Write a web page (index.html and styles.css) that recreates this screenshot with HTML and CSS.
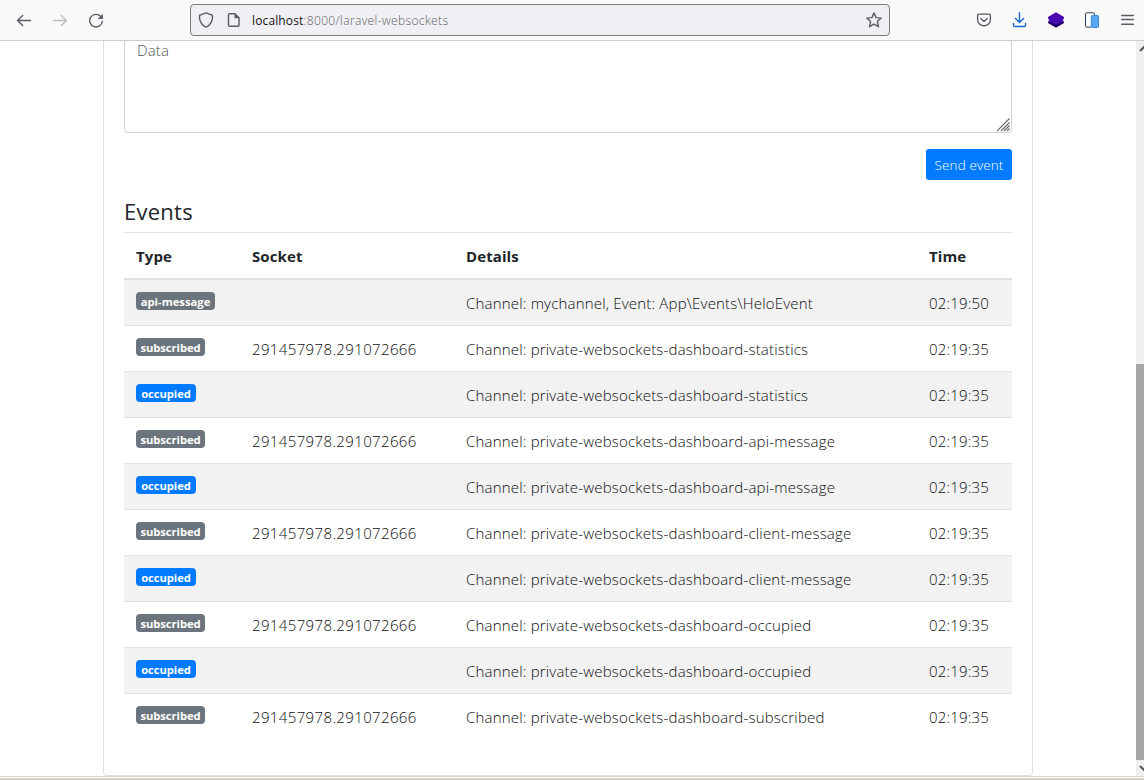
FILE: index.html
```html
<!DOCTYPE html>
<html lang="en">
<head>
<meta charset="utf-8">
<title>Laravel WebSockets</title>
<link rel="stylesheet" href="styles.css">
</head>
<body>
<header class="toolbar">
  <nav class="nav-buttons">
    <svg class="icon" width="16" height="16" viewBox="0 0 16 16"><path d="M14.5 8.5H1.5M6.7 3.5L1.5 8.5L6.7 13.5"/></svg>
    <svg class="icon faded" width="16" height="16" viewBox="0 0 16 16"><path d="M1.5 8.5H14.5M9.3 3.5L14.5 8.5L9.3 13.5"/></svg>
    <svg class="icon" width="16" height="16" viewBox="0 0 16 16"><path d="M12.6 4.3A6.3 6.3 0 1 0 14.3 9.2"/><path class="solid" d="M14.9 1.7V6.9H9.7Z"/></svg>
  </nav>
  <div class="urlbar">
    <svg class="icon" width="16" height="16" viewBox="0 0 16 16"><path d="M8 .9L14.5 3.4C15 8.3 12.7 13.3 8 15.2C3.3 13.3 1 8.3 1.5 3.4Z"/></svg>
    <svg class="icon page" width="16" height="16" viewBox="0 0 16 16"><path d="M3.5 1.7H9L13 5.7V13.3Q13 14.3 12 14.3H3.5Q2.5 14.3 2.5 13.3V2.7Q2.5 1.7 3.5 1.7Z"/><path class="solid" d="M8.5 1.3V6.3H13.4Z"/></svg>
    <span class="url"><b>localhost</b>:8000/laravel-websockets</span>
    <svg class="icon star" width="16" height="16" viewBox="0 0 16 16"><path d="M8 .9L10.1 5.6L15.2 6.1L11.4 9.6L12.5 14.7L8 12.1L3.5 14.7L4.6 9.6L.8 6.1L5.9 5.6Z"/></svg>
  </div>
  <div class="tools">
    <svg class="icon" width="16" height="16" viewBox="0 0 16 16"><path d="M2.8 2.1H13.2Q14.4 2.1 14.4 3.3V7.6A6.4 6.2 0 0 1 1.6 7.6V3.3Q1.6 2.1 2.8 2.1Z"/><path d="M4.8 6.4L8 9.4L11.2 6.4"/></svg>
    <svg class="icon download" width="16" height="16" viewBox="0 0 16 16"><path d="M7.5 .7V10.2M3.5 6.4L7.5 10.4L11.5 6.4M1.5 11.5V13.2Q1.5 14.5 2.8 14.5H12.2Q13.5 14.5 13.5 13.2V11.5"/></svg>
    <svg width="16" height="16" viewBox="0 0 16 16"><path fill="#21006b" d="M0 10L2 8.5H14L16 10V11L8 15.7L0 11Z"/><path fill="#4a08b0" d="M8 .3L16 5V6.5L14.5 8L16 9L8 12.5L0 9L1.5 8L0 6.5V5Z"/></svg>
    <svg width="16" height="16" viewBox="0 0 16 16"><path d="M10.5 3V2.2Q10.5 .8 9.2 .8H2.8Q1.5 .8 1.5 2.2V13.8Q1.5 15.1 2.8 15.1H7" fill="#fff" stroke="#26385d"/><rect x="7.3" y="3.4" width="7.2" height="12" rx="1.2" fill="#53a7f5" stroke="#3d82c9"/></svg>
    <svg class="icon" width="14" height="16" viewBox="0 0 14 16"><path d="M1.7 3.5H13.3M1.7 7.5H13.3M1.7 12.2H13.3"/></svg>
  </div>
</header>
<div class="viewport">
  <main class="page-body">
    <section class="card">
      <div class="data-field">Data
        <svg class="grip" width="14" height="14" viewBox="0 0 14 14"><path d="M0 13L12.5 .5M4 13L12.5 4.5M7 13L12.5 7.5M10 13L12.5 10.5"/></svg>
      </div>
      <div class="actions"><button class="send">Send event</button></div>
      <h4 class="title">Events</h4>
      <table class="events">
        <colgroup><col class="c-type"><col class="c-socket"><col class="c-details"><col class="c-time"></colgroup>
        <thead><tr><th>Type</th><th>Socket</th><th>Details</th><th>Time</th></tr></thead>
        <tbody>
          <tr><td><span class="badge api">api-message</span></td><td></td><td>Channel: mychannel, Event: App\Events\HeloEvent</td><td>02:19:50</td></tr>
          <tr><td><span class="badge">subscribed</span></td><td class="num">291457978.291072666</td><td>Channel: private-websockets-dashboard-statistics</td><td>02:19:35</td></tr>
          <tr><td><span class="badge primary">occupied</span></td><td></td><td>Channel: private-websockets-dashboard-statistics</td><td>02:19:35</td></tr>
          <tr><td><span class="badge">subscribed</span></td><td class="num">291457978.291072666</td><td>Channel: private-websockets-dashboard-api-message</td><td>02:19:35</td></tr>
          <tr><td><span class="badge primary">occupied</span></td><td></td><td>Channel: private-websockets-dashboard-api-message</td><td>02:19:35</td></tr>
          <tr><td><span class="badge">subscribed</span></td><td class="num">291457978.291072666</td><td>Channel: private-websockets-dashboard-client-message</td><td>02:19:35</td></tr>
          <tr><td><span class="badge primary">occupied</span></td><td></td><td>Channel: private-websockets-dashboard-client-message</td><td>02:19:35</td></tr>
          <tr><td><span class="badge">subscribed</span></td><td class="num">291457978.291072666</td><td>Channel: private-websockets-dashboard-occupied</td><td>02:19:35</td></tr>
          <tr><td><span class="badge primary">occupied</span></td><td></td><td>Channel: private-websockets-dashboard-occupied</td><td>02:19:35</td></tr>
          <tr><td><span class="badge">subscribed</span></td><td class="num">291457978.291072666</td><td>Channel: private-websockets-dashboard-subscribed</td><td>02:19:35</td></tr>
        </tbody>
      </table>
    </section>
  </main>
  <aside class="scrollbar">
    <svg class="arrow" width="8" height="15" viewBox="0 0 8 15"><path d="M4 10L8.5 5.5"/></svg>
    <div class="thumb"></div>
    <svg class="arrow" width="8" height="16" viewBox="0 0 8 16"><path d="M4 6L8.5 10.5"/></svg>
  </aside>
</div>
<footer class="window-edge"></footer>
</body>
</html>
```
FILE: styles.css
```css
* { box-sizing: border-box; }
body {
  margin: 0;
  width: 1144px;
  height: 780px;
  display: flex;
  flex-direction: column;
  overflow: hidden;
  background: #fff;
  color: #0c0e10;
  font: 300 15px/24px "Open Sans", "Noto Sans", sans-serif;
}
svg { display: block; flex: none; }
.toolbar {
  flex: none;
  height: 41px;
  display: flex;
  align-items: center;
  background: #f9f9fa;
  border-bottom: 1px solid #ccc;
}
.icon { fill: none; stroke: #5b5b66; stroke-width: 1.4; stroke-linecap: round; stroke-linejoin: round; }
.icon .solid { fill: #5b5b66; stroke: none; }
.faded { stroke: #bdbdc1; }
.download { stroke: #1a66d2; }
.nav-buttons { display: flex; gap: 20px; width: 190px; padding-left: 16px; }
.urlbar {
  display: flex;
  align-items: center;
  width: 700px;
  height: 32px;
  padding: 0 7px;
  background: #f0f0f4;
  border: 1px solid #7d7d80;
  border-radius: 4px;
}
.page { margin-left: 12px; }
.url { margin: 1px 0 0 10px; flex: 1; font-size: 12px; color: #5c5c61; letter-spacing: 0.38px; }
.url b { font-weight: 400; color: #15141a; letter-spacing: 0.13px; }
.tools { display: flex; gap: 20px; margin-left: 86px; }
.viewport { flex: none; height: 735px; display: flex; overflow: hidden; }
.page-body { width: 1136px; padding-left: 103px; }
.card {
  width: 930px;
  height: 735px;
  padding: 0 20px;
  border: 1px solid #dfdfdf;
  border-top: 0;
  border-radius: 0 0 4px 4px;
}
.data-field {
  position: relative;
  height: 92px;
  padding: 0 12px;
  line-height: 18px;
  letter-spacing: 0.15px;
  color: #4c555d;
  border: 1px solid #ced4da;
  border-top: 0;
  border-radius: 0 0 4px 4px;
}
.grip { position: absolute; right: 0; bottom: 0; fill: none; stroke: #666; stroke-width: 1.1; }
.actions { display: flex; justify-content: flex-end; margin-top: 16px; }
.send {
  width: 86px;
  height: 31px;
  padding: 1px 0 0;
  border: 0;
  border-radius: 3px;
  background: #007bff;
  color: #fff;
  font: inherit;
  font-size: 13.5px;
  letter-spacing: 0.1px;
}
.title { margin: 17px 0 6px; font-size: 22px; font-weight: 400; line-height: 29px; letter-spacing: 0.25px; color: #212529; }
.events { width: 888px; table-layout: fixed; border-collapse: separate; border-spacing: 0; }
.c-type { width: 116px; }
.c-socket { width: 214px; }
.c-details { width: 463px; }
.c-time { width: 95px; }
th, td { padding: 0 12px; text-align: left; white-space: nowrap; border-top: 1px solid #dee2e6; }
th { height: 48px; font-size: 15px; font-weight: 700; border-bottom: 2px solid #dee2e6; letter-spacing: 0.1px; color: #212529; }
td { height: 46px; padding-top: 1px; letter-spacing: 0.19px; }
td.num { letter-spacing: 0.37px; }
tbody tr:first-child td { height: 45px; border-top: 0; }
tbody tr:nth-child(odd) td { background: #f2f2f2; }
.badge {
  display: block;
  width: 69px;
  height: 18px;
  margin-bottom: 5px;
  border-radius: 4px;
  background: #6c757d;
  color: #fff;
  font-size: 11.25px;
  font-weight: 700;
  line-height: 19.5px;
  letter-spacing: -0.08px;
  text-align: center;
}
.api { width: 79px; letter-spacing: 0; }
.primary { width: 60px; background: #007bff; }
.scrollbar { width: 8px; display: flex; flex-direction: column; justify-content: space-between; background: #f0f0f0; }
.thumb { height: 396px; margin-top: auto; background: #a6a6a6; }
.arrow { fill: none; stroke: #555; stroke-width: 2; }
.window-edge { flex: none; height: 4px; background: #d4d0c8; border-top: 1px solid #d4d0c8; box-shadow: inset 0 1px #fff; }
```
